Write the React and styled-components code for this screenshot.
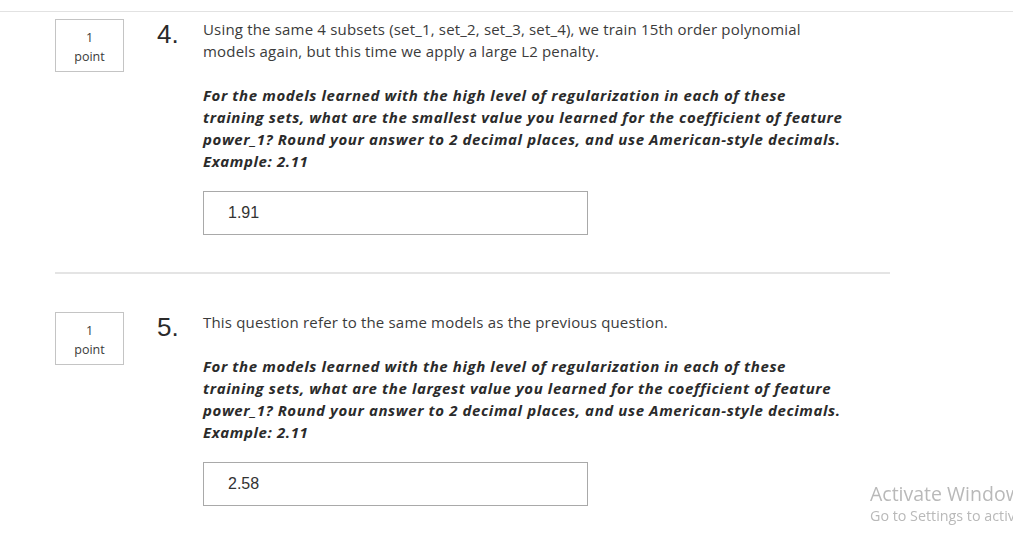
import React from "react";
import styled, { createGlobalStyle } from "styled-components";

const GlobalStyle = createGlobalStyle`
  html, body {
    margin: 0;
    padding: 0;
    background: #fff;
    overflow: hidden;
  }
  body {
    font-family: "Open Sans", "Noto Sans", Arial, sans-serif;
    color: #373a3c;
  }
`;

const Page = styled.div`
  padding-top: 11px;
  height: 524px;
`;

const Sheet = styled.div`
  border-top: 1px solid #e2e2e2;
  padding-top: 7px;
`;

const Question = styled.div`
  display: flex;
  align-items: flex-start;
  padding-left: 55px;
`;

const PointBox = styled.div`
  box-sizing: border-box;
  width: 69px;
  height: 53px;
  border: 1px solid #c4c4c4;
  display: flex;
  flex-direction: column;
  align-items: center;
  justify-content: center;
  font-size: 12.5px;
  line-height: 19px;
  color: #3a3a3a;
  padding-top: 2px;
`;

const Number = styled.div`
  width: 46px;
  margin-left: 33px;
  font-family: "Liberation Sans", Arial, sans-serif;
  font-size: 26px;
  line-height: 26px;
  padding-top: 2px;
  color: #2a2a2a;
`;

const Body = styled.div`
  width: 645px;
  margin-top: -1px;
`;

const Prompt = styled.p`
  margin: 0;
  font-size: 15px;
  line-height: 22px;
  letter-spacing: 0.18px;
  color: #3b3b3b;
`;

const Instruction = styled.p`
  margin: 22px 0 0;
  font-size: 15px;
  line-height: 22px;
  letter-spacing: 0.6px;
  font-weight: 700;
  font-style: italic;
  color: #2b2b2b;
`;

const Answer = styled.input`
  display: block;
  box-sizing: border-box;
  width: 385px;
  height: 44px;
  margin-top: 19px;
  padding: 0 24px;
  border: 1px solid #a9a9a9;
  border-radius: 0;
  outline: none;
  background: #fff;
  font-family: "Liberation Sans", Arial, sans-serif;
  font-size: 16px;
  color: #333;
`;

const Divider = styled.hr`
  width: 835px;
  height: 2px;
  margin: 37px 0 38px 55px;
  border: 0;
  background: #e4e4e4;
`;

const Watermark = styled.div`
  position: fixed;
  left: 870px;
  top: 481px;
  white-space: nowrap;
  font-family: "Open Sans", "Noto Sans", sans-serif;
  color: #b9b9b9;
`;

const WatermarkTitle = styled.div`
  font-size: 19.5px;
  line-height: 25px;
`;

const WatermarkSub = styled.div`
  font-size: 14.3px;
  line-height: 20px;
`;

const questions = [
  {
    n: "4.",
    prompt:
      "Using the same 4 subsets (set_1, set_2, set_3, set_4), we train 15th order polynomial models again, but this time we apply a large L2 penalty.",
    instruction:
      "For the models learned with the high level of regularization in each of these training sets, what are the smallest value you learned for the coefficient of feature power_1? Round your answer to 2 decimal places, and use American-style decimals. Example: 2.11",
    answer: "1.91",
  },
  {
    n: "5.",
    prompt: "This question refer to the same models as the previous question.",
    instruction:
      "For the models learned with the high level of regularization in each of these training sets, what are the largest value you learned for the coefficient of feature power_1? Round your answer to 2 decimal places, and use American-style decimals. Example: 2.11",
    answer: "2.58",
  },
];

export default function App() {
  return (
    <Page>
      <GlobalStyle />
      <Sheet>
        {questions.map((q, i) => (
          <React.Fragment key={q.n}>
            {i > 0 && <Divider />}
            <Question>
              <PointBox>
                <span>1</span>
                <span>point</span>
              </PointBox>
              <Number>{q.n}</Number>
              <Body>
                <Prompt>{q.prompt}</Prompt>
                <Instruction>{q.instruction}</Instruction>
                <Answer readOnly defaultValue={q.answer} />
              </Body>
            </Question>
          </React.Fragment>
        ))}
      </Sheet>
      <Watermark>
        <WatermarkTitle>Activate Windows</WatermarkTitle>
        <WatermarkSub>Go to Settings to activate Windows.</WatermarkSub>
      </Watermark>
    </Page>
  );
}
